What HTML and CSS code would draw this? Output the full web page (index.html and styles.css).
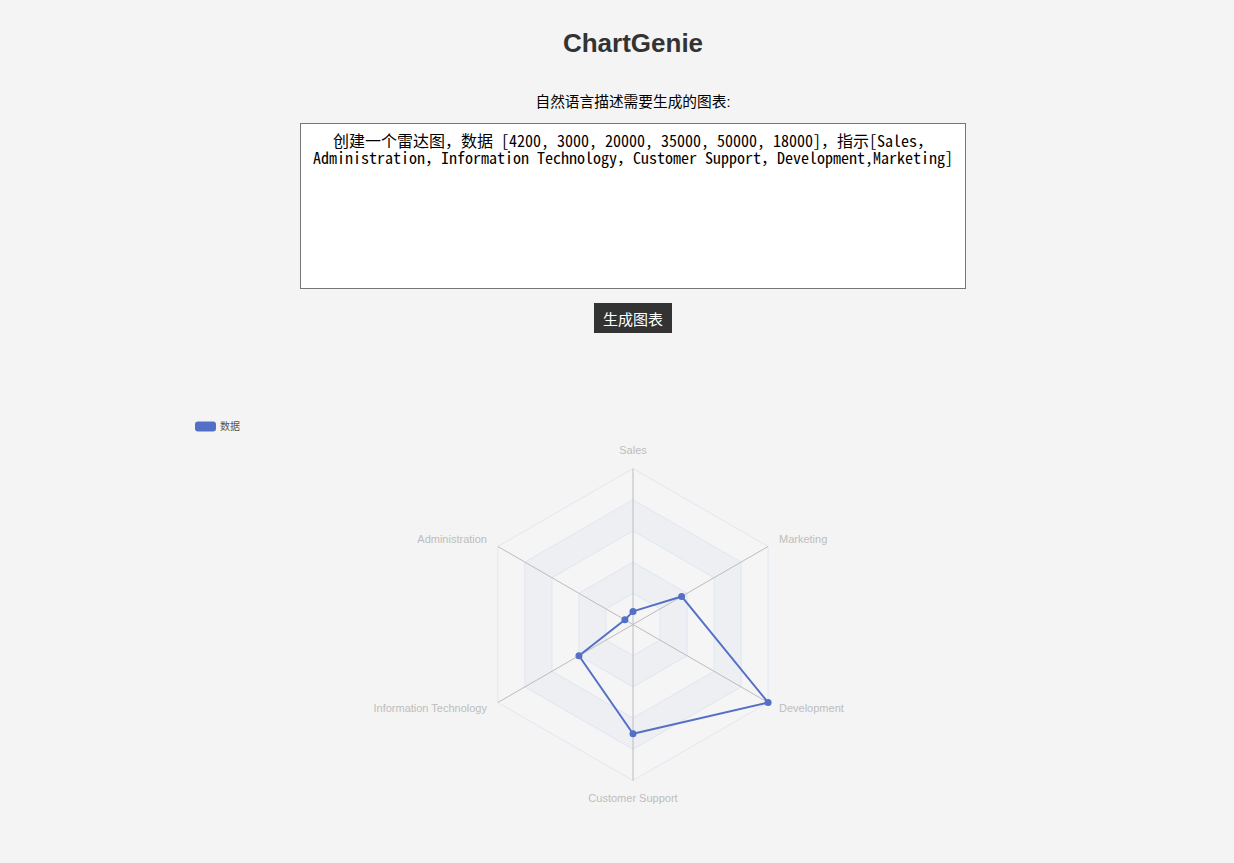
FILE: index.html
```html
<!DOCTYPE html>
<html lang="zh">
<head>
<meta charset="utf-8">
<title>ChartGenie</title>
<link rel="stylesheet" href="styles.css">
</head>
<body>
<main class="app">
  <h1 class="title">ChartGenie</h1>
  <label class="prompt-label" for="prompt">自然语言描述需要生成的图表:</label>
  <textarea id="prompt" class="prompt">创建一个雷达图，数据 [4200, 3000, 20000, 35000, 50000, 18000]，指示[Sales，Administration，Information Technology，Customer Support，Development,Marketing]</textarea>
  <button class="generate" type="button">生成图表</button>
  <div class="chart">
    <svg class="chart-svg" width="900" height="440" viewBox="0 0 900 440">
      <g class="legend">
        <rect x="12" y="21.5" width="21" height="10" rx="3" fill="#5470c6"/>
        <text x="37" y="30" class="legend-text">数据</text>
      </g>
      <g class="split-area">
        <path fill="rgba(250,250,250,0.2)" d="M450,193.3 L422.98,208.9 L422.98,240.1 L450,255.7 L477.02,240.1 L477.02,208.9 Z"/>
        <path fill="rgba(210,219,238,0.2)" fill-rule="evenodd" d="M450,162.1 L395.96,193.3 L395.96,255.7 L450,286.9 L504.04,255.7 L504.04,193.3 Z M450,193.3 L422.98,208.9 L422.98,240.1 L450,255.7 L477.02,240.1 L477.02,208.9 Z"/>
        <path fill="rgba(250,250,250,0.2)" fill-rule="evenodd" d="M450,130.9 L368.94,177.7 L368.94,271.3 L450,318.1 L531.06,271.3 L531.06,177.7 Z M450,162.1 L395.96,193.3 L395.96,255.7 L450,286.9 L504.04,255.7 L504.04,193.3 Z"/>
        <path fill="rgba(210,219,238,0.2)" fill-rule="evenodd" d="M450,99.7 L341.92,162.1 L341.92,286.9 L450,349.3 L558.08,286.9 L558.08,162.1 Z M450,130.9 L368.94,177.7 L368.94,271.3 L450,318.1 L531.06,271.3 L531.06,177.7 Z"/>
        <path fill="rgba(250,250,250,0.2)" fill-rule="evenodd" d="M450,68.5 L314.9,146.5 L314.9,302.5 L450,380.5 L585.1,302.5 L585.1,146.5 Z M450,99.7 L341.92,162.1 L341.92,286.9 L450,349.3 L558.08,286.9 L558.08,162.1 Z"/>
      </g>
      <g class="split-line" fill="none" stroke="#e0e6f1" stroke-width="1">
        <path d="M450,193.3 L422.98,208.9 L422.98,240.1 L450,255.7 L477.02,240.1 L477.02,208.9 Z"/>
        <path d="M450,162.1 L395.96,193.3 L395.96,255.7 L450,286.9 L504.04,255.7 L504.04,193.3 Z"/>
        <path d="M450,130.9 L368.94,177.7 L368.94,271.3 L450,318.1 L531.06,271.3 L531.06,177.7 Z"/>
        <path d="M450,99.7 L341.92,162.1 L341.92,286.9 L450,349.3 L558.08,286.9 L558.08,162.1 Z"/>
        <path d="M450,68.5 L314.9,146.5 L314.9,302.5 L450,380.5 L585.1,302.5 L585.1,146.5 Z"/>
      </g>
      <g class="axis-line" stroke="#bcbcbc" stroke-width="1">
        <line x1="450" y1="224.5" x2="450" y2="68.5"/>
        <line x1="450" y1="224.5" x2="314.9" y2="146.5"/>
        <line x1="450" y1="224.5" x2="314.9" y2="302.5"/>
        <line x1="450" y1="224.5" x2="450" y2="380.5"/>
        <line x1="450" y1="224.5" x2="585.1" y2="302.5"/>
        <line x1="450" y1="224.5" x2="585.1" y2="146.5"/>
      </g>
      <g class="axis-names">
        <text x="450" y="54" text-anchor="middle">Sales</text>
        <text x="304" y="143" text-anchor="end">Administration</text>
        <text x="304" y="312" text-anchor="end">Information Technology</text>
        <text x="450" y="402" text-anchor="middle">Customer Support</text>
        <text x="596" y="312" text-anchor="start">Development</text>
        <text x="596" y="143" text-anchor="start">Marketing</text>
      </g>
      <g class="series">
        <polygon fill="none" stroke="#5470c6" stroke-width="2" stroke-linejoin="round" points="450,211.4 441.89,219.82 395.96,255.7 450,333.7 585.1,302.5 498.63,196.42"/>
        <g fill="#5470c6">
          <circle cx="450" cy="211.4" r="3.5"/>
          <circle cx="441.89" cy="219.82" r="3.5"/>
          <circle cx="395.96" cy="255.7" r="3.5"/>
          <circle cx="450" cy="333.7" r="3.5"/>
          <circle cx="585.1" cy="302.5" r="3.5"/>
          <circle cx="498.63" cy="196.42" r="3.5"/>
        </g>
      </g>
    </svg>
  </div>
</main>
</body>
</html>
```

FILE: styles.css
```css
html, body {
  margin: 0;
  padding: 0;
  background: #f4f4f4;
}

body {
  font-family: "Liberation Sans", "Noto Sans CJK SC", sans-serif;
  color: #000;
}

.app {
  display: flex;
  flex-direction: column;
  align-items: center;
  padding-left: 32px;
}

.title {
  margin: 28px 0 0;
  font-size: 26px;
  line-height: 30px;
  font-weight: bold;
  color: #333;
}

.prompt-label {
  margin-top: 34px;
  font-size: 14.7px;
  line-height: 20px;
  color: #000;
}

.prompt {
  box-sizing: border-box;
  margin-top: 11px;
  width: 666px;
  height: 166px;
  padding: 8px 8px;
  border: 1px solid #767676;
  background: #fff;
  font-family: "Noto Sans Mono CJK SC", "Liberation Mono", monospace;
  font-size: 16px;
  line-height: 17px;
  text-align: center;
  color: #000;
  resize: none;
}

.generate {
  margin-top: 14px;
  width: 78px;
  height: 30px;
  padding: 0;
  border: none;
  background: #333;
  color: #fff;
  font-family: "Noto Sans CJK SC", sans-serif;
  font-size: 15px;
  cursor: pointer;
}

.chart {
  margin-top: 67px;
  width: 900px;
  height: 440px;
}

.chart-svg {
  display: block;
}

.legend-text {
  font-family: "Noto Sans CJK SC", sans-serif;
  font-size: 10px;
  fill: #555;
}

.axis-names text {
  font-family: "Liberation Sans", "Noto Sans CJK SC", sans-serif;
  font-size: 11px;
  fill: #bdbdbd;
}
```
